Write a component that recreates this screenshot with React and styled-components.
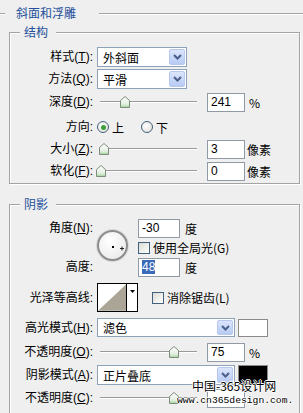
import React from 'react';
import styled, { createGlobalStyle } from 'styled-components';

const GlobalStyle = createGlobalStyle`
  html, body { margin: 0; padding: 0; }
  body {
    background: #efefef;
    font-family: "Liberation Sans", "Noto Sans CJK SC", sans-serif;
    font-size: 12px;
    color: #000;
  }
`;

const Page = styled.div`
  position: relative;
  width: 303px;
  height: 413px;
  overflow: hidden;
`;

const Outer = styled.fieldset`
  margin: 5px -10px 0 -4px;
  padding: 3px 12px 0 12px;
  border: 1px solid #a3a3a3;
  box-shadow: inset 1px 1px 0 #fff;
  min-width: 0;
`;

const Group = styled.fieldset`
  margin: ${(p) => p.$mt || 0}px 0 0 0;
  padding: ${(p) => p.$pt}px 0 ${(p) => p.$pb}px 0;
  border: 1px solid #a3a3a3;
  box-shadow: inset 1px 1px 0 #fff, 1px 1px 0 #fff;
  min-width: 0;
`;

const Title = styled.legend`
  margin-left: ${(p) => p.$ml}px;
  padding: 0 ${(p) => p.$pr}px 0 ${(p) => p.$pl}px;
  line-height: 16px;
  height: 16px;
  color: #24509a;
  background: #efefef;
  font-family: "Noto Sans CJK SC", sans-serif;
`;

const Row = styled.div`
  display: flex;
  align-items: center;
  height: ${(p) => p.$h || 20}px;
  margin-top: ${(p) => p.$mt || 0}px;
`;

const Label = styled.span`
  width: 83px;
  margin-right: 4px;
  text-align: right;
  white-space: nowrap;
  line-height: 14px;
`;

const Select = styled.div`
  display: flex;
  align-items: center;
  box-sizing: border-box;
  width: ${(p) => p.$w}px;
  height: ${(p) => p.$h || 20}px;
  border: 1px solid #8fa3b8;
  background: #fff;
  padding: 0 1px 0 5px;
`;

const SelectText = styled.span`
  flex: 1;
  font-family: "Noto Sans CJK SC", sans-serif;
`;

const DropButton = styled.span`
  display: flex;
  align-items: center;
  justify-content: center;
  box-sizing: border-box;
  width: 16px;
  height: ${(p) => p.$h || 16}px;
  border: 1px solid #b6c8ee;
  border-radius: 2px;
  background: linear-gradient(#dbe5fc, #b8cbf4);
`;

const Field = styled.div`
  box-sizing: border-box;
  width: ${(p) => p.$w || 38}px;
  height: 19px;
  padding: 0 3px;
  border: 1px solid #8f9aa6;
  background: #fff;
  line-height: 17px;
`;

const Selected = styled.span`
  background: #3a6ab8;
  color: #fff;
`;

const Unit = styled.span`
  margin-left: ${(p) => p.$ml || 4}px;
  font-family: "Noto Sans CJK SC", sans-serif;
`;

const Slider = styled.div`
  position: relative;
  width: 97px;
  height: 14px;
  margin: 0 10px 0 3px;
`;

const Track = styled.div`
  position: absolute;
  left: 0;
  right: 0;
  top: 6px;
  height: 1px;
  background: #9a9a9a;
  box-shadow: 0 1px 0 #fff;
`;

const Thumb = styled.svg`
  position: absolute;
  top: 1px;
`;

const Radio = styled.span`
  display: inline-flex;
  align-items: center;
  justify-content: center;
  box-sizing: border-box;
  width: 12px;
  height: 12px;
  border-radius: 50%;
  border: 1px solid #40607e;
  background: radial-gradient(circle at 40% 40%, #fff, #dcdcd4);
  &::after {
    content: '';
    width: 5px;
    height: 5px;
    border-radius: 50%;
    background: ${(p) => (p.$on ? '#3a9e3a' : 'transparent')};
  }
`;

const Choice = styled.span`
  display: flex;
  align-items: center;
  gap: 3px;
  margin-left: ${(p) => p.$ml || 0}px;
  font-family: "Noto Sans CJK SC", sans-serif;
`;

const Check = styled.span`
  box-sizing: border-box;
  width: 12px;
  height: 12px;
  border: 1px solid #40607e;
  background: linear-gradient(135deg, #dcdcd4, #fff);
`;

const AngleBlock = styled.div`
  display: grid;
  grid-template-columns: auto 41px 1fr;
  grid-template-rows: 20px 19px 20px;
  align-items: center;
`;

const Dial = styled.div`
  position: relative;
  grid-column: 2;
  grid-row: 1 / 4;
  align-self: start;
  margin-top: 12px;
  box-sizing: border-box;
  width: 31px;
  height: 31px;
  border-radius: 50%;
  border: 2px solid #8c8c8c;
  background: radial-gradient(circle at 40% 35%, #fff, #e6e6e6);
  box-shadow: 0 0 0 1px #d8d8d8;
`;

const Contour = styled.div`
  display: flex;
  box-sizing: border-box;
  width: 41px;
  height: 29px;
  border: 1px solid #000;
  background: #fff;
`;

const ContourArrow = styled.div`
  width: 10px;
  border-left: 1px solid #000;
  display: flex;
  justify-content: center;
  padding-top: 6px;
`;

const Swatch = styled.div`
  box-sizing: border-box;
  width: 30px;
  height: ${(p) => p.$h}px;
  margin-left: 3px;
  border: 1px solid #8a8a8a;
  background: ${(p) => p.$color};
`;

const Mark = styled.div`
  position: absolute;
  left: ${(p) => p.$x}px;
  top: ${(p) => p.$y}px;
  white-space: nowrap;
  color: #000;
  text-shadow: 1px 0 #fff, -1px 0 #fff, 0 1px #fff, 0 -1px #fff;
`;

const MarkTitle = styled(Mark)`
  font-family: "Noto Sans CJK SC", sans-serif;
  font-size: 12px;
  line-height: 14px;
`;

const MarkUrl = styled(Mark)`
  font-family: "Liberation Mono", monospace;
  font-size: 9.7px;
  line-height: 11px;
`;

const Chevron = () => (
  <svg width="9" height="6" viewBox="0 0 9 6">
    <path d="M1 1 L4.5 4.5 L8 1" fill="none" stroke="#4a5f8a" strokeWidth="2" />
  </svg>
);

const Combo = ({ w, h, children }) => (
  <Select $w={w} $h={h}>
    <SelectText>{children}</SelectText>
    <DropButton $h={h ? h - 4 : 16}>
      <Chevron />
    </DropButton>
  </Select>
);

const Slide = ({ at }) => (
  <Slider>
    <Track />
    <Thumb width="10" height="12" viewBox="0 0 10 12" style={{ left: at - 105 }}>
      <defs>
        <linearGradient id="th" x1="0" y1="0" x2="0" y2="1">
          <stop offset="0" stopColor="#ffffff" />
          <stop offset="0.7" stopColor="#e3eee0" />
          <stop offset="1" stopColor="#9fd29a" />
        </linearGradient>
      </defs>
      <polygon points="0.5,4.5 5,0.5 9.5,4.5 9.5,11.5 0.5,11.5" fill="url(#th)" stroke="#7d8c7b" />
    </Thumb>
  </Slider>
);

const Key = ({ text, k }) => (
  <Label>
    {text}({k ? <u>{k}</u> : null}):
  </Label>
);

const App = () => (
  <Page>
    <GlobalStyle />
    <Outer>
      <Title $ml={-4} $pl={11} $pr={23}>斜面和浮雕</Title>

      <Group $pt={7} $pb={2}>
        <Title $ml={10} $pl={4} $pr={8}>结构</Title>
        <Row>
          <Key text="样式" k="T" />
          <Combo w={90}>外斜面</Combo>
        </Row>
        <Row $mt={2}>
          <Key text="方法" k="Q" />
          <Combo w={90}>平滑</Combo>
        </Row>
        <Row $mt={3}>
          <Key text="深度" k="D" />
          <Slide at={125} />
          <Field>241</Field>
          <Unit>%</Unit>
        </Row>
        <Row $mt={5}>
          <Label>方向:</Label>
          <Choice>
            <Radio $on />上
          </Choice>
          <Choice $ml={17}>
            <Radio />下
          </Choice>
        </Row>
        <Row $mt={2}>
          <Key text="大小" k="Z" />
          <Slide at={104} />
          <Field>3</Field>
          <Unit $ml={2}>像素</Unit>
        </Row>
        <Row $mt={2}>
          <Key text="软化" k="F" />
          <Slide at={101} />
          <Field>0</Field>
          <Unit $ml={2}>像素</Unit>
        </Row>
      </Group>

      <Group $mt={12} $pt={6} $pb={10}>
        <Title $ml={10} $pl={4} $pr={8}>阴影</Title>
        <AngleBlock>
          <Key text="角度" k="N" />
          <Dial>
            <svg width="27" height="27" viewBox="0 0 27 27">
              <rect x="13" y="14" width="2" height="2" fill="#000" />
              <path d="M21 16.5 H25 M23 14.5 V18.5" stroke="#222" strokeWidth="1" />
            </svg>
          </Dial>
          <Row $h={20} style={{ gridColumn: 3, gridRow: 1 }}>
            <Field $w={42}>-30</Field>
            <Unit $ml={5}>度</Unit>
          </Row>
          <Row $h={19} style={{ gridColumn: 3, gridRow: 2 }}>
            <Choice>
              <Check />
              使用全局光(G)
            </Choice>
          </Row>
          <Label style={{ gridRow: 3, gridColumn: 1 }}>高度:</Label>
          <Row $h={20} style={{ gridColumn: 3, gridRow: 3 }}>
            <Field $w={42}>
              <Selected>48</Selected>
            </Field>
            <Unit $ml={5}>度</Unit>
          </Row>
        </AngleBlock>

        <Row $mt={6} $h={29}>
          <Label>光泽等高线:</Label>
          <Contour>
            <svg width="29" height="27" viewBox="0 0 29 27">
              <polygon points="0,27 29,0 29,27" fill="#aaa596" />
            </svg>
            <ContourArrow>
              <svg width="5" height="3" viewBox="0 0 5 3">
                <polygon points="0,0 5,0 2.5,3" fill="#000" />
              </svg>
            </ContourArrow>
          </Contour>
          <Choice $ml={14}>
            <Check />
            消除锯齿(L)
          </Choice>
        </Row>

        <Row $mt={6} $h={19}>
          <Key text="高光模式" k="H" />
          <Combo w={138} h={19}>滤色</Combo>
          <Swatch $h={18} $color="#fff" />
        </Row>
        <Row $mt={5}>
          <Key text="不透明度" k="O" />
          <Slide at={174} />
          <Field>75</Field>
          <Unit>%</Unit>
        </Row>
        <Row $mt={3}>
          <Key text="阴影模式" k="A" />
          <Combo w={138}>正片叠底</Combo>
          <Swatch $h={20} $color="#000" />
        </Row>
        <Row $mt={3}>
          <Key text="不透明度" k="C" />
          <Slide at={174} />
          <Field>&nbsp;</Field>
        </Row>
      </Group>
    </Outer>

    <MarkTitle $x={192} $y={379}>中国-365设计网</MarkTitle>
    <MarkUrl $x={177} $y={395}>www.cn365design.com.</MarkUrl>
  </Page>
);

export default App;
